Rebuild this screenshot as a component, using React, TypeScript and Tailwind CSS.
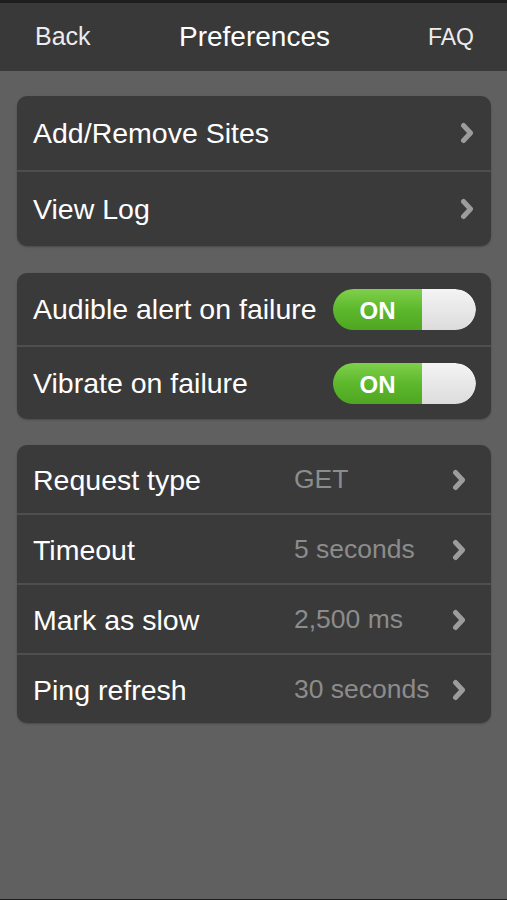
import React from 'react';

const font = { fontFamily: '"Liberation Sans", Arial, sans-serif' };

function Chevron() {
  return (
    <svg width="16" height="22" viewBox="0 0 16 22" fill="none">
      <path
        d="M4.5 3.5 L11.5 11 L4.5 18.5"
        stroke="#9c9c9c"
        strokeWidth="5"
        strokeLinecap="round"
        strokeLinejoin="round"
      />
    </svg>
  );
}

function Toggle() {
  return (
    <div className="flex h-[41px] w-[143px] overflow-hidden rounded-full shadow-[inset_0_1px_2px_rgba(0,0,0,0.4)]">
      <div className="flex w-[89px] items-center justify-center bg-gradient-to-b from-[#7fd04a] via-[#5db82c] to-[#4fa622] pt-[3px]">
        <span className="text-[24px] font-bold text-white">ON</span>
      </div>
      <div className="flex-1 rounded-r-full bg-gradient-to-b from-[#f4f4f4] to-[#dcdcdc]" />
    </div>
  );
}

function LinkRow({ label }: { label: string }) {
  return (
    <div className="flex h-[74px] items-center justify-between pl-4 pr-4">
      <span className="text-[28.5px] text-white">{label}</span>
      <Chevron />
    </div>
  );
}

function ToggleRow({ label }: { label: string }) {
  return (
    <div className="flex h-[72px] items-center justify-between pl-4 pr-[15px]">
      <span className="text-[28.5px] text-white">{label}</span>
      <Toggle />
    </div>
  );
}

function ValueRow({ label, value }: { label: string; value: string }) {
  return (
    <div className="flex h-[68px] items-center pl-4 pr-6 pt-[2px]">
      <span className="w-[261px] text-[28.5px] text-white">{label}</span>
      <span className="flex-1 text-[26.5px] text-[#8c8c8c]">{value}</span>
      <Chevron />
    </div>
  );
}

const divider = 'h-[2px] bg-[#4e4e4e]';
const card =
  'overflow-hidden rounded-[10px] bg-[#3a3a3a] shadow-[0_1px_2px_rgba(0,0,0,0.25)]';

export default function App() {
  return (
    <div className="flex h-[900px] w-[507px] flex-col bg-[#606060]" style={font}>
      {/* Header */}
      <div className="h-[3px] bg-[#1e1e1e]" />
      <div className="flex h-[68px] items-center bg-[#393939] pl-[35px] pr-[33px]">
        <span className="flex-1 text-[25px] text-[#ececec]">Back</span>
        <span className="text-[28px] text-white">Preferences</span>
        <span className="flex-1 text-right text-[23px] text-[#ececec]">FAQ</span>
      </div>

      <div className="flex flex-1 flex-col pl-[17px] pr-4 pt-[25px]">
        <div className={card}>
          <LinkRow label="Add/Remove Sites" />
          <div className={divider} />
          <LinkRow label="View Log" />
        </div>

        <div className={`${card} mt-[27px]`}>
          <ToggleRow label="Audible alert on failure" />
          <div className={divider} />
          <ToggleRow label="Vibrate on failure" />
        </div>

        <div className={`${card} mt-[26px]`}>
          <ValueRow label="Request type" value="GET" />
          <div className={divider} />
          <ValueRow label="Timeout" value="5 seconds" />
          <div className={divider} />
          <ValueRow label="Mark as slow" value="2,500 ms" />
          <div className={divider} />
          <ValueRow label="Ping refresh" value="30 seconds" />
        </div>
      </div>
      <div className="h-[1px] bg-[#1e1e1e]" />
    </div>
  );
}
